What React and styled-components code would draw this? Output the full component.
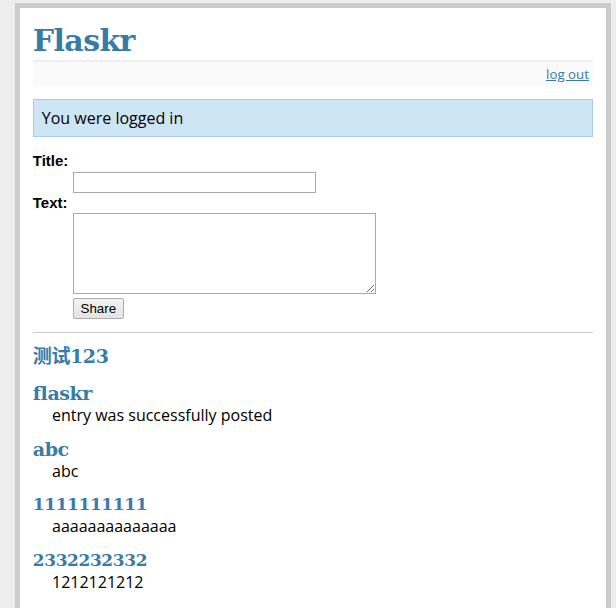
import React from "react";
import styled, { createGlobalStyle } from "styled-components";

const Global = createGlobalStyle`
  html, body { margin: 0; padding: 0; }
  body {
    background: #eee;
    font-family: "Open Sans", "Noto Sans", sans-serif;
    color: #000;
  }
`;

const Page = styled.div`
  margin: 3px 0 0 15px;
  width: 560px;
  border: 5px solid #ccc;
  padding: 12.8px;
  background: #fff;
`;

const Title = styled.h1`
  margin: 0;
  font-family: "DejaVu Serif", "Liberation Serif", serif;
  font-size: 30px;
  line-height: 39px;
  font-weight: bold;
  color: #377ba8;
  border-bottom: 2px solid #eee;
  letter-spacing: -0.6px;
`;

const MetaNav = styled.div`
  text-align: right;
  font-size: 13.3px;
  line-height: 17px;
  padding: 3.84px;
  margin-bottom: 13px;
  background: #fafafa;
`;

const Link = styled.a`
  color: #377ba8;
  text-decoration: underline;
`;

const Flash = styled.div`
  background: #cee5f5;
  padding: 8px;
  border: 1px solid #aacbe2;
  font-size: 16px;
  line-height: 20px;
`;

const AddEntry = styled.form`
  font-size: 14.4px;
  border-bottom: 1px solid #ccc;
`;

const Dl = styled.dl`
  margin: 14.4px 0 13.4px;
  font-weight: bold;
  font-family: "Liberation Sans", Arial, sans-serif;
`;

const Dt = styled.dt`
  font-size: 15px;
  line-height: 17px;
`;

const Dd = styled.dd`
  margin: 0 0 0 40px;
  display: flex;
  flex-direction: column;
  align-items: flex-start;
`;

const TextInput = styled.input`
  box-sizing: border-box;
  width: 243px;
  height: 21px;
  border: 1px solid #a9a9a9;
  margin: 3px 0 1px;
  padding: 1px 2px;
  font: 13px "Liberation Sans", Arial, sans-serif;
`;

const TextArea = styled.textarea`
  box-sizing: border-box;
  width: 303px;
  height: 81px;
  border: 1px solid #a9a9a9;
  margin: 2px 0 2px;
  padding: 2px;
  font: 13px "Liberation Mono", monospace;
`;

const Button = styled.button`
  box-sizing: border-box;
  width: 51px;
  height: 21px;
  padding: 0;
  margin: 2px 0 0;
  font: 13.33px "Liberation Sans", Arial, sans-serif;
  color: #000;
  border: 1px solid #acacac;
  border-radius: 2px;
  background: linear-gradient(#f2f2f2, #e4e4e4);
`;

const Entries = styled.ul`
  list-style: none;
  margin: 0;
  padding: 0;
`;

const Entry = styled.li`
  margin: 12.8px 19.2px;
`;

const EntryTitle = styled.h2`
  margin: 0 0 0 -19.2px;
  font-family: "DejaVu Serif", "Liberation Serif", "Noto Sans CJK SC", serif;
  font-size: ${(p) => (p.$digits ? "17px" : "19px")};
  line-height: 21px;
  font-weight: bold;
  color: #377ba8;
  letter-spacing: -0.4px;
`;

const EntryText = styled.div`
  font-size: 16px;
  line-height: 22px;
  min-height: ${(p) => (p.$empty ? "3px" : "0")};
`;

const entries = [
  { title: "测试123", text: "" },
  { title: "flaskr", text: "entry was successfully posted" },
  { title: "abc", text: "abc" },
  { title: "1111111111", text: "aaaaaaaaaaaaaa" },
  { title: "2332232332", text: "1212121212" },
];

export default function App() {
  return (
    <>
      <Global />
      <Page>
        <Title>Flaskr</Title>
        <MetaNav>
          <Link href="#">log out</Link>
        </MetaNav>
        <Flash>You were logged in</Flash>
        <AddEntry onSubmit={(e) => e.preventDefault()}>
          <Dl>
            <Dt>Title:</Dt>
            <Dd>
              <TextInput type="text" />
            </Dd>
            <Dt>Text:</Dt>
            <Dd>
              <TextArea rows={5} cols={40} />
              <Button type="submit">Share</Button>
            </Dd>
          </Dl>
        </AddEntry>
        <Entries>
          {entries.map((e, i) => (
            <Entry key={i}>
              <EntryTitle $digits={/^\d+$/.test(e.title)}>{e.title}</EntryTitle>
              <EntryText $empty={!e.text}>{e.text}</EntryText>
            </Entry>
          ))}
        </Entries>
      </Page>
    </>
  );
}
